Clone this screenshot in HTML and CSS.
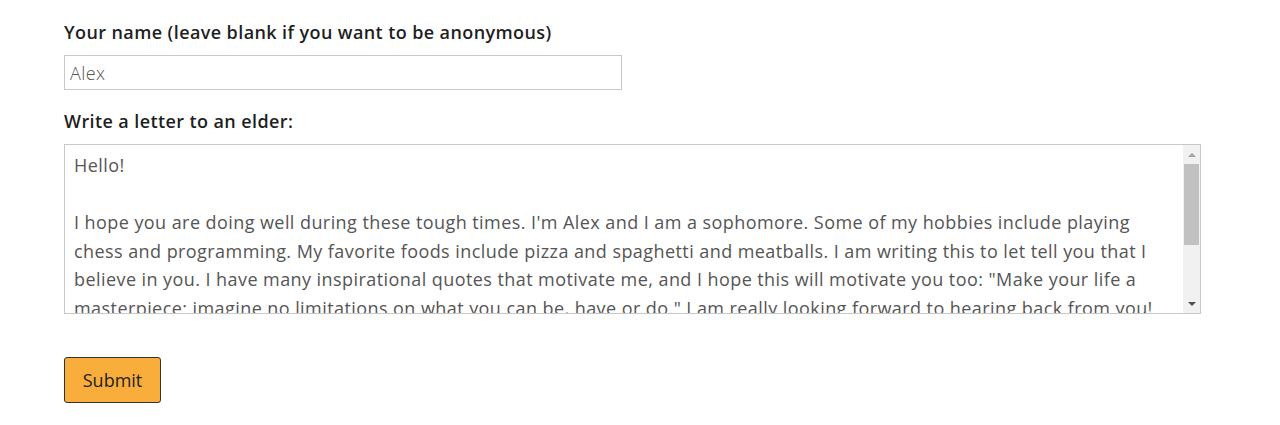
FILE: index.html
```html
<!DOCTYPE html>
<html lang="en">
<head>
    <meta charset="UTF-8">
    <link rel="stylesheet" href="styles.css">
</head>
<body>
    <form class="letter-form">
        <div class="field">
            <label for="name">Your name (leave blank if you want to be anonymous)</label>
            <input type="text" id="name" class="name-input" value="Alex">
        </div>

        <div class="field">
            <label for="letter">Write a letter to an elder:</label>
            <div class="letter-box">
                <textarea id="letter" class="letter-input">Hello!

I hope you are doing well during these tough times. I'm Alex and I am a sophomore. Some of my hobbies include playing chess and programming. My favorite foods include pizza and spaghetti and meatballs. I am writing this to let tell you that I believe in you. I have many inspirational quotes that motivate me, and I hope this will motivate you too: "Make your life a masterpiece; imagine no limitations on what you can be, have or do." I am really looking forward to hearing back from you!

Best,
Alex</textarea>
                <div class="scrollbar">
                    <span class="arrow arrow-up"></span>
                    <span class="thumb"></span>
                    <span class="arrow arrow-down"></span>
                </div>
            </div>
        </div>

        <button type="button" class="submit-btn">Submit</button>
    </form>
</body>
</html>
```

FILE: styles.css
```css
body {
    margin: 0;
    padding: 22px 64px;
    font-family: "Open Sans", Lato, sans-serif;
    color: #222;
    background: #fff;
}

.letter-form {
    display: flex;
    flex-direction: column;
    align-items: flex-start;
}

.field {
    display: flex;
    flex-direction: column;
    gap: 13px;
    margin-bottom: 21px;
}

label {
    font-size: 18px;
    line-height: 20px;
    font-weight: 600;
    letter-spacing: 0.4px;
    color: #1f1f1f;
}

.name-input {
    width: 558px;
    height: 35px;
    box-sizing: border-box;
    padding: 0 5px;
    border: 1px solid #c8c8c8;
    font-family: inherit;
    font-size: 18px;
    font-weight: 300;
    letter-spacing: 0.4px;
    color: #555;
}

.letter-box {
    position: relative;
    width: 1137px;
    height: 170px;
}

.letter-input {
    display: block;
    width: 100%;
    height: 100%;
    box-sizing: border-box;
    padding: 6px 26px 6px 9px;
    border: 1px solid #c8c8c8;
    font-family: inherit;
    font-size: 18px;
    line-height: 28.5px;
    letter-spacing: 0.43px;
    color: #555;
    resize: none;
    overflow-y: scroll;
}

/* drawn scrollbar, the native one is hidden in the capture */
.scrollbar {
    position: absolute;
    top: 1px;
    right: 1px;
    bottom: 1px;
    width: 17px;
    display: flex;
    flex-direction: column;
    align-items: center;
    background: #f1f1f1;
}

.arrow {
    flex: 0 0 4px;
    width: 0;
    height: 0;
    box-sizing: border-box;
    border-left: 4px solid transparent;
    border-right: 4px solid transparent;
}

.arrow-up {
    border-bottom: 4px solid #a3a3a3;
    margin-top: 8px;
    margin-bottom: 7px;
}

.arrow-down {
    border-top: 4px solid #505050;
    margin-top: auto;
    margin-bottom: 7px;
}

.thumb {
    width: 15px;
    height: 81px;
    background: #c1c1c1;
}

.submit-btn {
    margin-top: 22px;
    width: 97px;
    height: 46px;
    background: #f9ae3b;
    border: 1px solid #333;
    border-radius: 3px;
    font-family: inherit;
    font-size: 18px;
    color: #222;
    cursor: pointer;
}
```
